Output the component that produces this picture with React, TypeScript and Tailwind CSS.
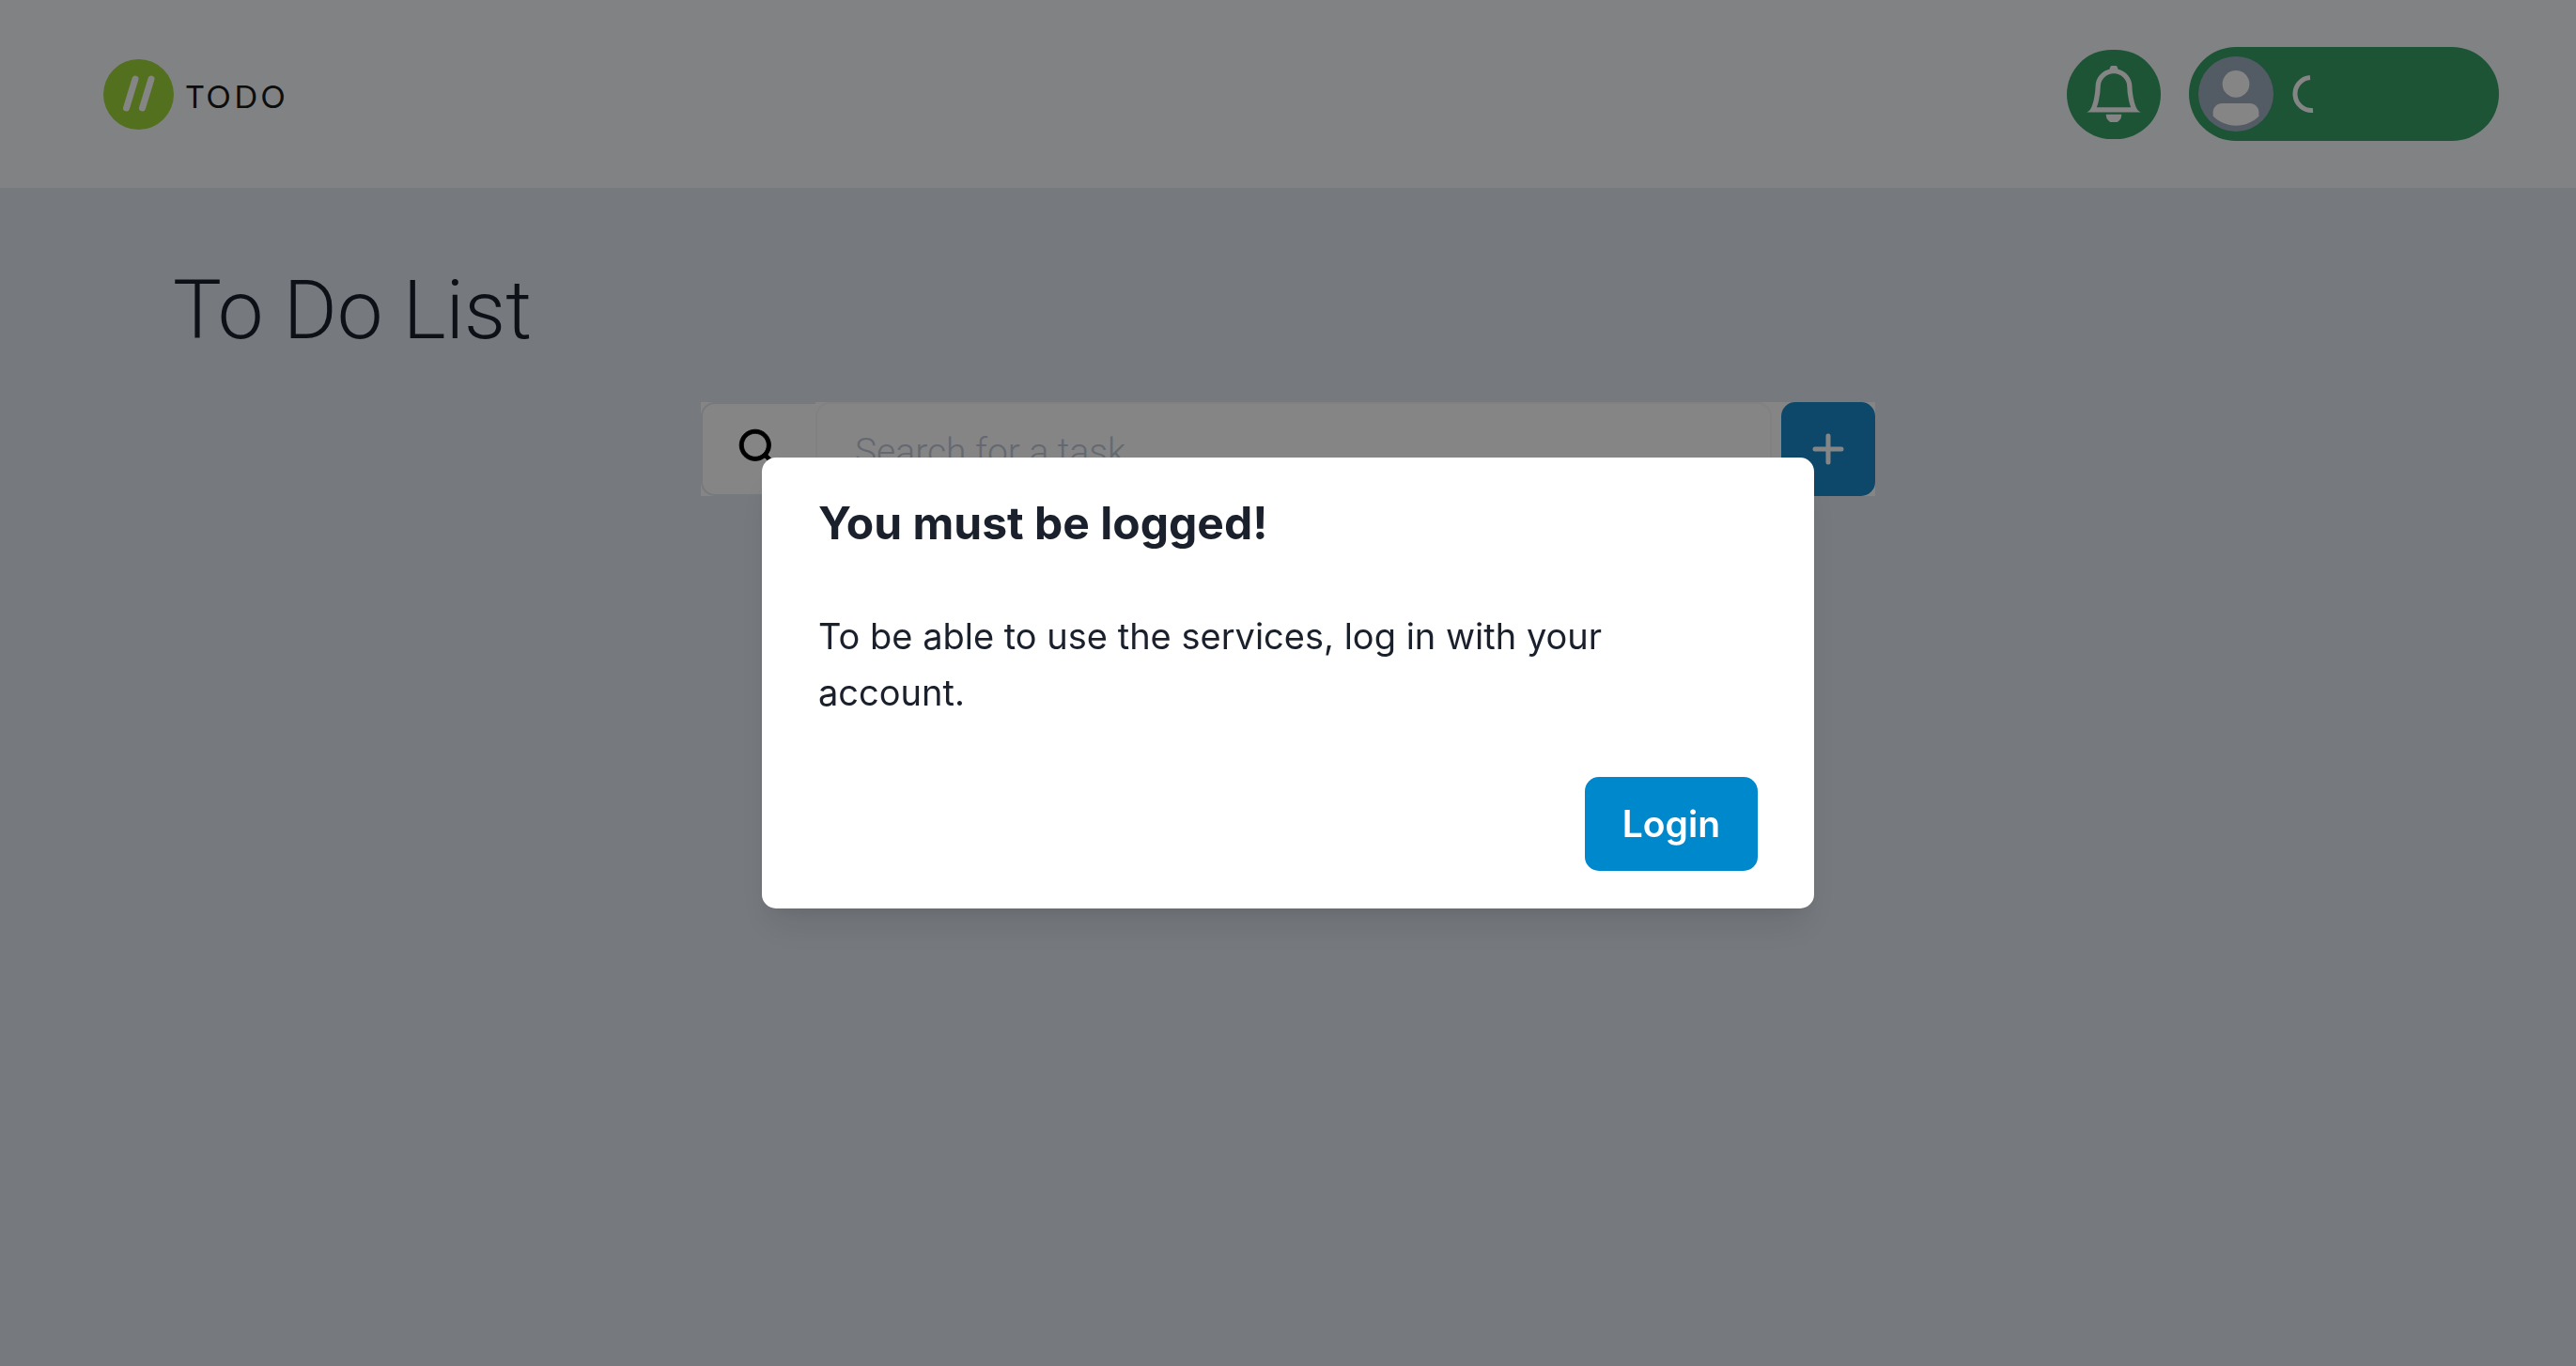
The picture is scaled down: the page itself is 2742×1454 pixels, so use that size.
import { BiSearch } from "react-icons/bi";
import { BsBell } from "react-icons/bs";

function Logo() {
  return (
    <a href="#" className="flex items-center gap-[13px] text-[#1a1a1a]">
      <svg viewBox="0 0 75 75" className="size-[75px]" aria-hidden="true">
        <circle cx="37.5" cy="37.5" r="37.5" fill="#9fd63d" />
        <path
          d="M34 21 L24.5 52 M51 21 L41.5 52"
          stroke="#ffffff"
          strokeWidth="7"
          strokeLinecap="round"
        />
      </svg>
      <span className="pt-[6px] font-[Lato,sans-serif] text-[32px] leading-10 tracking-[4px]">TODO</span>
    </a>
  );
}

function Avatar() {
  return (
    <span className="size-20 overflow-hidden rounded-full bg-[#a0aec0]">
      <svg viewBox="0 0 128 128" className="size-full" fill="#ffffff" aria-hidden="true">
        <path d="M103,102.1388 C93.094,111.92 79.3504,118 64.1638,118 C48.8056,118 34.9294,111.768 25,101.7892 L25,95.2 C25,86.8096 31.981,80 40.6,80 L87.4,80 C96.019,80 103,86.8096 103,95.2 L103,102.1388 Z" />
        <circle cx="64" cy="47" r="23" />
      </svg>
    </span>
  );
}

function Spinner() {
  return (
    <svg viewBox="0 0 40 40" className="size-10" fill="none" aria-hidden="true">
      <path d="M19 2.5 A17.5 17.5 0 0 0 22 37.4" stroke="#ffffff" strokeWidth="5" />
    </svg>
  );
}

function Header() {
  return (
    <header className="flex h-[200px] items-center justify-between bg-[#f7fafc] pr-[82px] pl-[110px]">
      <Logo />
      <div className="flex items-center gap-[30px]">
        <button
          type="button"
          aria-label="Notifications"
          className="flex h-[95px] w-25 items-center justify-center rounded-full bg-[#38a169] text-white"
        >
          <BsBell size={60} stroke="currentColor" strokeWidth={0.4} />
        </button>
        <button
          type="button"
          aria-label="Account"
          className="flex h-25 w-[330px] items-center gap-5 rounded-full bg-[#38a169] px-[10px]"
        >
          <Avatar />
          <Spinner />
        </button>
      </div>
    </header>
  );
}

function SearchBar() {
  return (
    <form className="mx-auto flex h-25 w-[1250px] max-w-full bg-white">
      <label
        htmlFor="task"
        aria-label="Search"
        className="flex w-[122px] items-center justify-center rounded-l-[15px] border-2 border-r-0 border-[#e2e8f0] text-black"
      >
        <BiSearch size={50} stroke="currentColor" strokeWidth={0.4} />
      </label>
      <input
        id="task"
        type="text"
        placeholder="Search for a task"
        className="mr-[10px] min-w-0 flex-1 rounded-[15px] border-2 border-[#f7f7f7] px-10 pt-[6px] font-[Roboto,sans-serif] text-[39px] font-light placeholder:text-[#c0cad8]"
      />
      <button
        type="button"
        aria-label="Add task"
        className="flex size-25 items-center justify-center rounded-[15px] bg-[#198bcc]"
      >
        <svg viewBox="0 0 34 34" className="size-[34px]" aria-hidden="true">
          <path d="M17 3 V31 M3 17 H31" stroke="#ffffff" strokeWidth="5" strokeLinecap="round" />
        </svg>
      </button>
    </form>
  );
}

function LoginDialog() {
  return (
    <div className="fixed inset-0 flex items-center justify-center bg-black/48 font-[Inter,sans-serif]">
      <section
        role="alertdialog"
        aria-modal="true"
        aria-labelledby="dialog-title"
        aria-describedby="dialog-text"
        className="w-[1120px] max-w-full rounded-[15px] bg-white text-[#1a202c] shadow-[0_25px_38px_-8px_rgba(0,0,0,0.1),0_10px_15px_-5px_rgba(0,0,0,0.05)]"
      >
        <h2 id="dialog-title" className="px-15 py-10 text-[48px] leading-[60px] font-bold">
          You must be logged!
        </h2>
        <p id="dialog-text" className="px-15 py-5 text-[38px] leading-[60px]">
          To be able to use the services, log in with your account.
        </p>
        <div className="flex justify-end px-15 py-10">
          <button
            type="button"
            className="h-25 rounded-[15px] bg-[#0088cc] px-10 text-[39px] font-semibold text-white"
          >
            Login
          </button>
        </div>
      </section>
    </div>
  );
}

export default function App() {
  return (
    <div className="min-h-screen bg-[#e2e8f0]">
      <Header />
      <main className="px-[184px] pt-[76px]">
        <h1 className="mb-[44px] font-[Roboto,sans-serif] text-[87px] leading-[108px] font-[350] text-[#1a202c]">
          To Do List
        </h1>
        <SearchBar />
      </main>
      <LoginDialog />
    </div>
  );
}
